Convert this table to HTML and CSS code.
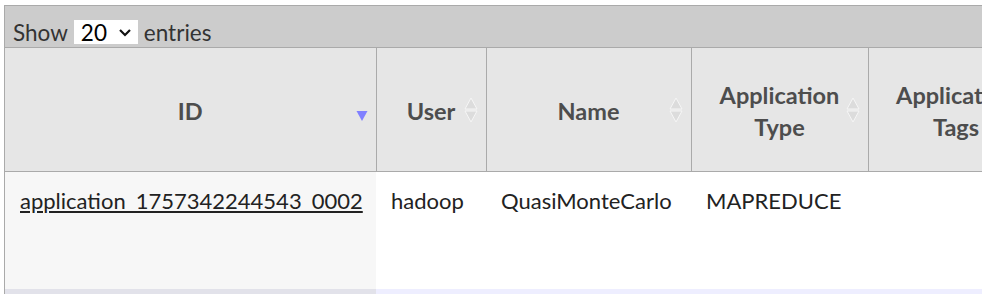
FILE: index.html
```html
<!DOCTYPE html>
<html>
<head>
<meta charset="utf-8">
<link rel="stylesheet" href="styles.css">
</head>
<body>
<div class="apps-wrapper">
  <div class="toolbar">
    <label class="length">Show
      <span class="select-box"><span class="select-value">20</span>
        <svg class="chev" width="14" height="9" viewBox="0 0 14 9"><path d="M2 2 L7 7 L12 2" fill="none" stroke="#111" stroke-width="2.2"/></svg>
      </span>
      entries</label>
  </div>
  <table class="apps">
    <colgroup>
      <col class="c-id"><col class="c-user"><col class="c-name"><col class="c-type"><col class="c-tags"><col class="c-rest">
    </colgroup>
    <thead>
      <tr>
        <th class="sorted">ID
          <svg class="sort-icon" width="12" height="12" viewBox="0 0 12 12"><path d="M0.5 1 L11.5 1 L6 11 Z" fill="#8080ff"/></svg>
        </th>
        <th>User
          <svg class="sort-icon both" width="14" height="26" viewBox="0 0 14 26"><path d="M7 1 L13 12 L1 12 Z M7 25 L13 14 L1 14 Z" fill="#dcdcdc" stroke="#f6f6f6" stroke-width="1"/></svg>
        </th>
        <th>Name
          <svg class="sort-icon both" width="14" height="26" viewBox="0 0 14 26"><path d="M7 1 L13 12 L1 12 Z M7 25 L13 14 L1 14 Z" fill="#dcdcdc" stroke="#f6f6f6" stroke-width="1"/></svg>
        </th>
        <th>Application<br>Type
          <svg class="sort-icon both" width="14" height="26" viewBox="0 0 14 26"><path d="M7 1 L13 12 L1 12 Z M7 25 L13 14 L1 14 Z" fill="#dcdcdc" stroke="#f6f6f6" stroke-width="1"/></svg>
        </th>
        <th>Application<br>Tags
          <svg class="sort-icon both" width="14" height="26" viewBox="0 0 14 26"><path d="M7 1 L13 12 L1 12 Z M7 25 L13 14 L1 14 Z" fill="#dcdcdc" stroke="#f6f6f6" stroke-width="1"/></svg>
        </th>
        <th></th>
      </tr>
    </thead>
    <tbody>
      <tr class="even">
        <td class="sorting_1"><a href="#">application_1757342244543_0002</a></td>
        <td>hadoop</td>
        <td>QuasiMonteCarlo</td>
        <td>MAPREDUCE</td>
        <td></td>
        <td></td>
      </tr>
      <tr class="odd">
        <td class="sorting_1"></td>
        <td></td>
        <td></td>
        <td></td>
        <td></td>
        <td></td>
      </tr>
    </tbody>
  </table>
</div>
</body>
</html>
```
FILE: styles.css
```css
html, body {
  margin: 0;
  padding: 0;
  background: #fff;
  overflow: hidden;
}

body {
  font-family: Lato, "Open Sans", sans-serif;
  color: #222;
}

.apps-wrapper {
  margin: 5px 0 0 4px;
  border-top: 1px solid #aaa;
  border-left: 1px solid #aaa;
  width: 1200px;
}

/* length selector bar above the table */
.toolbar {
  height: 42px;
  background: #ccc;
  border-bottom: 1px solid #aaa;
  display: flex;
  align-items: flex-end;
  padding-left: 8px;
  box-sizing: border-box;
}

.length {
  display: flex;
  align-items: center;
  gap: 6px;
  font-size: 22.5px;
  color: #333;
  height: 24px;
  margin-bottom: 3px;
}

.select-box {
  display: inline-flex;
  align-items: center;
  justify-content: space-between;
  width: 64px;
  height: 24px;
  background: #fff;
  box-sizing: border-box;
  padding: 0 6px 0 7px;
  color: #000;
}

.apps {
  border-collapse: collapse;
  table-layout: fixed;
  width: 1200px;
}

.c-id { width: 371px; }
.c-user { width: 110px; }
.c-name { width: 205px; }
.c-type { width: 177px; }
.c-tags { width: 176px; }
.c-rest { width: 161px; }

.apps th {
  position: relative;
  height: 123px;
  background: #e6e6e6;
  border-right: 1px solid #aaa;
  border-bottom: 1px solid #aaa;
  color: #4d4d4d;
  font-size: 23.5px;
  font-weight: bold;
  line-height: 32px;
  text-align: center;
  padding: 3px 20px 0;
  box-sizing: border-box;
}

.sort-icon {
  position: absolute;
  right: 8px;
  top: 62px;
}

.sort-icon.both {
  top: 49px;
}

.apps td {
  height: 118px;
  vertical-align: top;
  font-size: 22px;
  padding: 15px 15px 0 15px;
  box-sizing: border-box;
  white-space: nowrap;
}

.apps td a {
  color: #222;
  text-decoration: underline;
}

tr.even td { background: #fff; }
tr.even td.sorting_1 { background: #f7f7f7; }
tr.odd td { background: #eeeeff; }
tr.odd td.sorting_1 { background: #e2e2ea; }
```
